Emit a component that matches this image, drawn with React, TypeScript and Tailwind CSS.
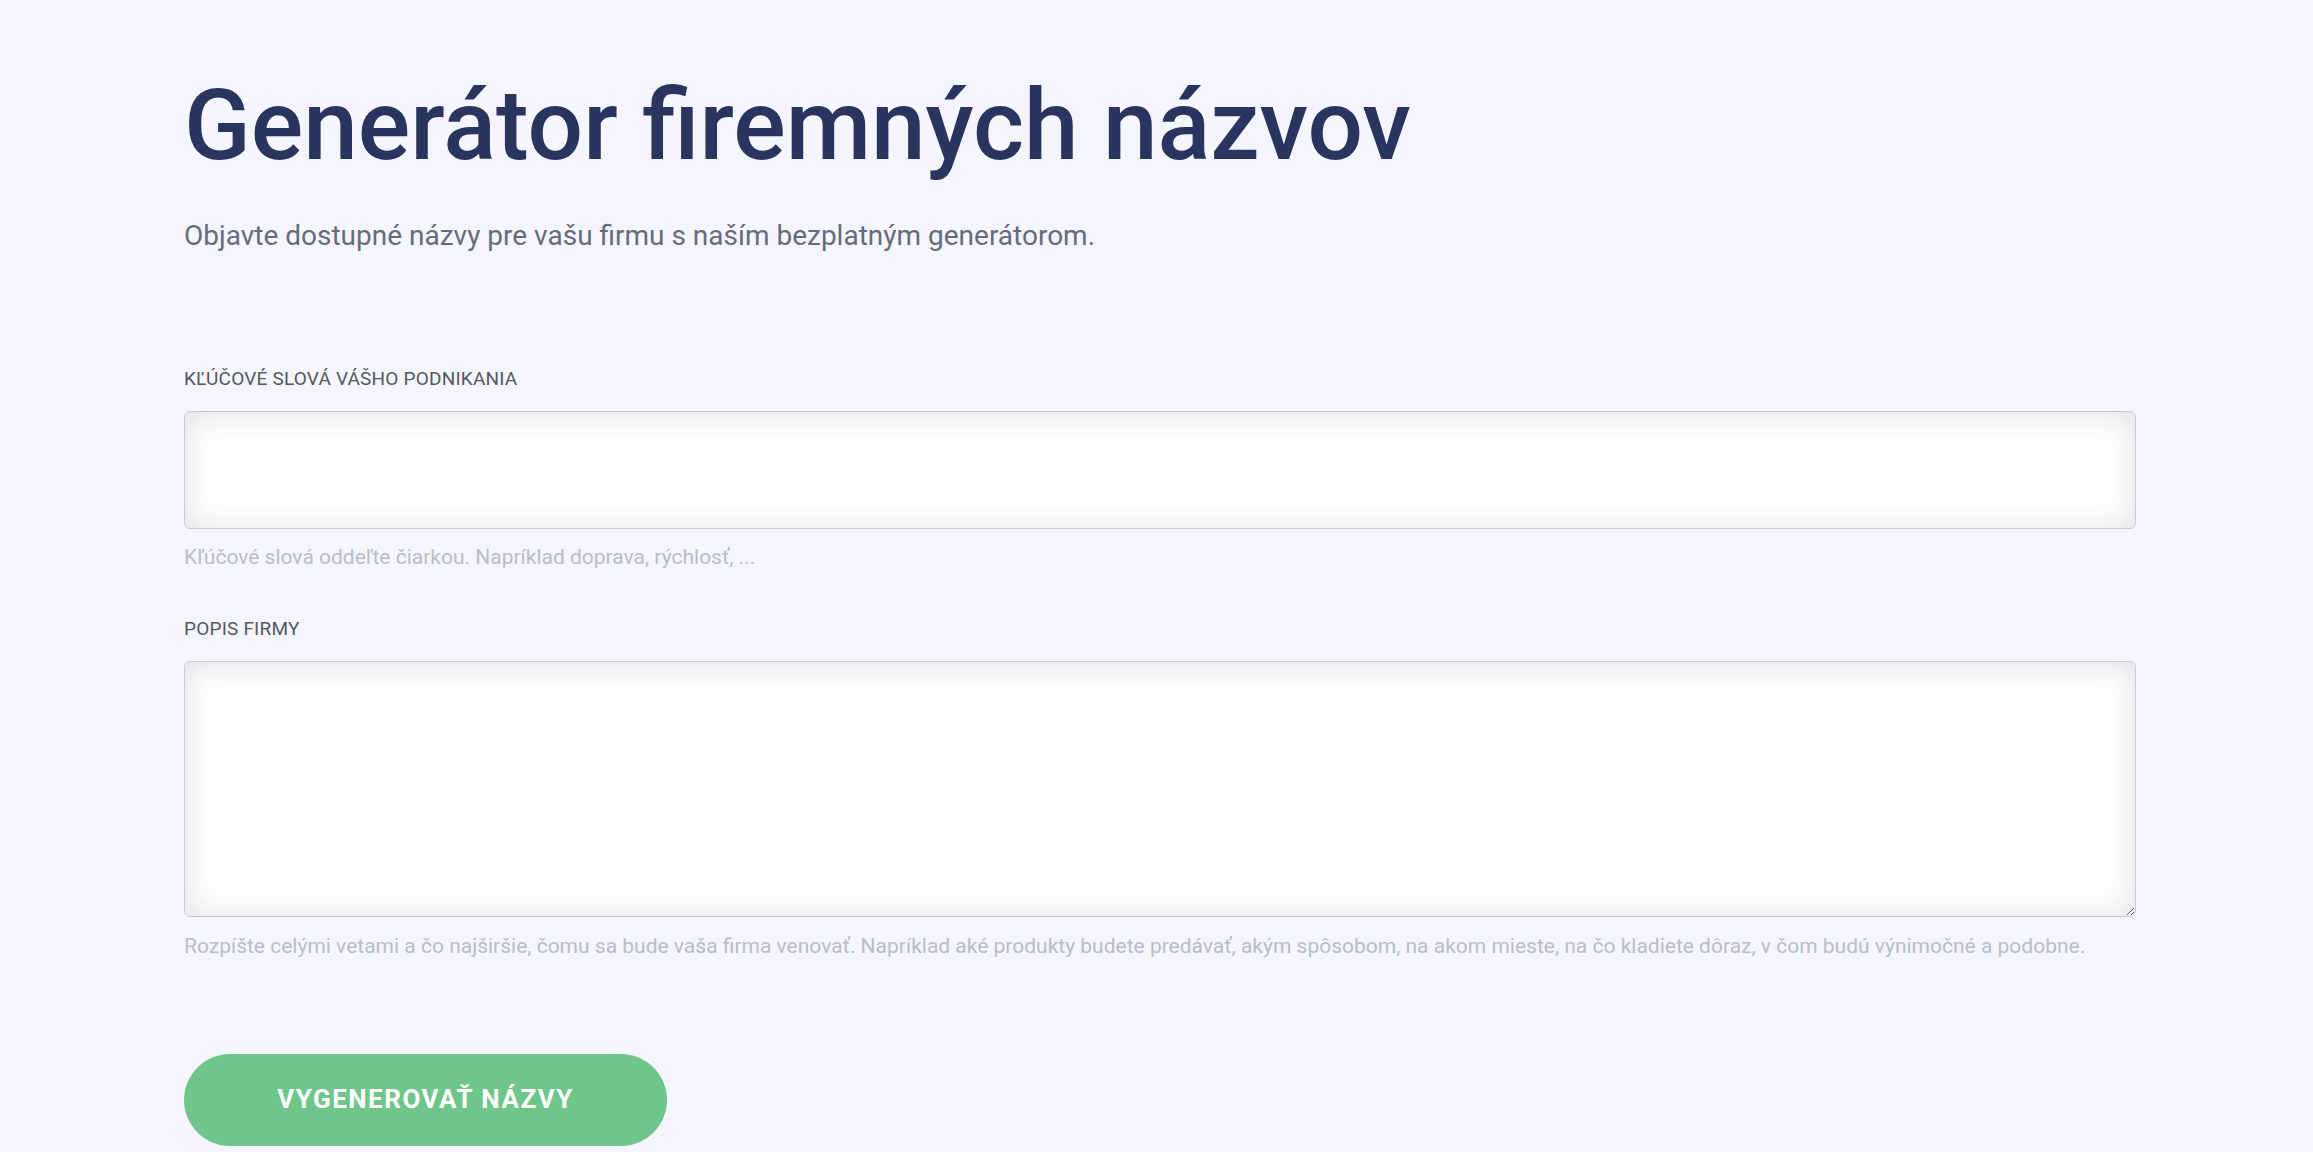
const App = () => {
  return (
    <div className="min-h-[1152px] w-full bg-[#f5f6fd] font-['Roboto',sans-serif]">
      <div className="ml-[184px] w-[1952px] pt-[67px]">
        <h1 className="text-[98px] leading-[1.2] font-medium text-[#29345f]">
          Generátor firemných názvov
        </h1>
        <p className="mt-[33px] text-[28px] leading-[36px] text-[#676b7b]">
          Objavte dostupné názvy pre vašu firmu s naším bezplatným generátorom.
        </p>

        <form className="mt-[113px] flex flex-col">
          <label className="text-[19px] leading-[24px] uppercase text-[#55585f] tracking-[0.2px]">
            Kľúčové slová vášho podnikania
          </label>
          <input
            type="text"
            className="mt-[20px] h-[118px] w-full rounded-[6px] border border-[#c9ccd6] bg-white px-5 text-[24px] shadow-[inset_0_2px_32px_rgba(40,45,70,0.15)] outline-none"
          />
          <p className="mt-[16px] text-[21px] leading-[24px] text-[#b9bccb]">
            Kľúčové slová oddeľte čiarkou. Napríklad doprava, rýchlosť, ...
          </p>

          <label className="mt-[48px] text-[19px] leading-[24px] uppercase text-[#55585f] tracking-[0.2px]">
            Popis firmy
          </label>
          <textarea className="mt-[20px] h-[256px] w-full rounded-[6px] border border-[#c9ccd6] bg-white px-5 py-4 text-[24px] shadow-[inset_0_2px_32px_rgba(40,45,70,0.15)] outline-none" />
          <p className="mt-[17px] text-[21px] leading-[24px] text-[#b9bccb]">
            Rozpíšte celými vetami a čo najširšie, čomu sa bude vaša firma venovať. Napríklad aké produkty budete predávať, akým spôsobom, na akom mieste, na čo kladiete dôraz, v čom budú výnimočné a podobne.
          </p>

          <button
            type="button"
            className="mt-[96px] h-[92px] w-[483px] rounded-full bg-[#6fc68a] text-[26px] font-bold uppercase tracking-[1.5px] text-white"
          >
            Vygenerovať názvy
          </button>
        </form>
      </div>
    </div>
  );
};

export default App;
